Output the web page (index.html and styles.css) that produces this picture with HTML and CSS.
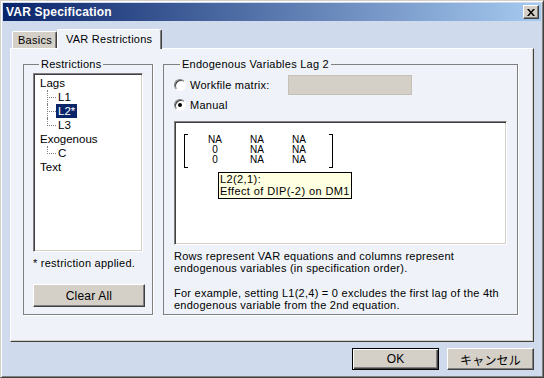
FILE: index.html
```html
<!DOCTYPE html>
<html>
<head>
<meta charset="utf-8">
<link rel="stylesheet" href="styles.css">
</head>
<body>
<div class="window">
  <div class="titlebar">
    <span class="title">VAR Specification</span>
    <span class="close"><svg width="8" height="7" viewBox="0 0 8 7"><path d="M0 0h2l2 2.5L6 0h2L5 3.5 8 7H6L4 4.5 2 7H0l3-3.5z" fill="#000"/></svg></span>
  </div>
  <div class="body">
    <div class="tabs">
      <div class="tab">Basics</div>
      <div class="tab active">VAR Restrictions</div>
    </div>
    <div class="panel">
      <fieldset class="group group-left">
        <legend>Restrictions</legend>
        <div class="tree">
          <div class="row">Lags</div>
          <div class="row child"><span class="lbl">L1</span></div>
          <div class="row child"><span class="lbl sel">L2*</span></div>
          <div class="row child last"><span class="lbl">L3</span></div>
          <div class="row">Exogenous</div>
          <div class="row child last"><span class="lbl">C</span></div>
          <div class="row">Text</div>
        </div>
        <div class="note">* restriction applied.</div>
        <button class="btn clear">Clear All</button>
      </fieldset>
      <fieldset class="group group-right">
        <legend>Endogenous Variables Lag 2</legend>
        <div class="radio-row">
          <span class="radio"></span><span class="rlabel wide">Workfile matrix:</span><span class="field"></span>
        </div>
        <div class="radio-row">
          <span class="radio checked"></span><span class="rlabel">Manual</span>
        </div>
        <div class="matrix-box">
          <div class="matrix">
            <span class="bracket left"></span>
            <div class="grid">
              <span>NA</span><span>NA</span><span>NA</span>
              <span>0</span><span>NA</span><span>NA</span>
              <span>0</span><span>NA</span><span>NA</span>
            </div>
            <span class="bracket right"></span>
          </div>
          <div class="tooltip">
            <div class="tline">L2(2,1):</div>
            <div class="tline">Effect of DIP(-2) on DM1</div>
          </div>
        </div>
        <div class="desc">
          <div class="dline">Rows represent VAR equations and columns represent</div>
          <div class="dline">endogenous variables (in specification order).</div>
        </div>
        <div class="desc second">
          <div class="dline">For example, setting L1(2,4) = 0 excludes the first lag of the 4th</div>
          <div class="dline">endogenous variable from the 2nd equation.</div>
        </div>
      </fieldset>
    </div>
    <div class="footer">
      <button class="btn default">OK</button>
      <button class="btn">キャンセル</button>
    </div>
  </div>
</div>
</body>
</html>
```

FILE: styles.css
```css
* { box-sizing: border-box; }
html, body { margin: 0; padding: 0; }
body {
  width: 544px;
  height: 378px;
  overflow: hidden;
  font-family: "Liberation Sans", "Noto Sans CJK JP", sans-serif;
  font-size: 11px;
  letter-spacing: 0.25px;
  color: #000;
}
.window {
  width: 544px;
  height: 378px;
  background: #cfdbed;
  border: 1px solid;
  border-color: #d4d0c8 #404040 #404040 #d4d0c8;
  box-shadow: inset 1px 1px #fff, inset -1px -1px #808080;
  padding: 2px;
  display: flex;
  flex-direction: column;
}
.titlebar {
  height: 18px;
  background: linear-gradient(to right, #0a246a, #a6caf0);
  display: flex;
  align-items: center;
  justify-content: space-between;
  padding: 0 2px 0 3px;
}
.title {
  color: #fff;
  font-weight: bold;
  font-size: 12px;
  letter-spacing: 0.2px;
}
.close {
  width: 16px;
  height: 14px;
  background: #d4d0c8;
  border: 1px solid;
  border-color: #fff #404040 #404040 #fff;
  box-shadow: inset -1px -1px #808080;
  display: flex;
  align-items: center;
  justify-content: center;
}
.close svg { display: block; margin-left: -1px; }
.body {
  flex: 1;
  padding: 0 7px;
  display: flex;
  flex-direction: column;
}
.tabs {
  margin-top: 8px;
  height: 19px;
  padding-left: 2px;
  display: flex;
  align-items: flex-start;
  position: relative;
  z-index: 1;
}
.tab {
  margin-top: 2px;
  height: 17px;
  width: 45px;
  background: #d4d0c8;
  border: 1px solid;
  border-bottom: none;
  border-color: #fff #404040 #fff #fff;
  box-shadow: inset -1px 0 #808080;
  border-radius: 2px 2px 0 0;
  padding: 2px 0 0 5px;
  line-height: 13px;
}
.tab.active {
  margin-top: 0;
  height: 20px;
  width: 105px;
  background: #eff3f9;
  padding: 3px 0 0 8px;
}
.panel {
  height: 294px;
  background: #eff3f9;
  border: 1px solid;
  border-color: #fff #404040 #404040 #fff;
  box-shadow: inset -1px -1px #d4d0c8;
  padding: 8px 0 26px 12px;
  display: flex;
  align-items: stretch;
}
.group {
  margin: 0;
  border: 1px solid #808080;
  box-shadow: 1px 1px #fff;
  min-width: 0;
}
.group legend {
  margin-left: 6px;
  padding: 0 2px;
  line-height: 14px;
}
.group-left {
  width: 130px;
  padding: 2px 9px 0 9px;
}
.group-right {
  width: 355px;
  margin-left: 10px;
  padding: 2px 9px 0 10px;
}
.tree {
  width: 110px;
  height: 179px;
  background: #fff;
  border: 1px solid;
  border-color: #808080 #fff #fff #808080;
  box-shadow: inset 1px 1px #404040, inset -1px -1px #d4d0c8;
  padding: 2px 0 0 6px;
  font-size: 11.5px;
  letter-spacing: 0;
}
.row {
  height: 14px;
  line-height: 14px;
  position: relative;
}
.row.child { padding-left: 16px; }
.row.child::before {
  content: "";
  position: absolute;
  left: 7px;
  top: 0;
  width: 8px;
  height: 7px;
  border-left: 1px dotted #808080;
  border-bottom: 1px dotted #808080;
}
.row.child:not(.last)::after {
  content: "";
  position: absolute;
  left: 7px;
  top: 7px;
  height: 7px;
  border-left: 1px dotted #808080;
}
.lbl {
  display: inline-block;
  padding: 0 2px;
}
.lbl.sel {
  background: #0a246a;
  color: #fff;
}
.note {
  margin-top: 5px;
  line-height: 13px;
}
.btn {
  font-family: "Liberation Sans", "Noto Sans CJK JP", sans-serif;
  font-size: 12px;
  letter-spacing: 0.2px;
  color: #000;
  background: #d4d0c8;
  border: 1px solid;
  border-color: #fff #404040 #404040 #fff;
  box-shadow: inset -1px -1px #808080;
  padding: 0;
  margin: 0;
}
.clear {
  display: block;
  margin-top: 14px;
  width: 112px;
  height: 23px;
}
.radio-row {
  height: 20px;
  display: flex;
  align-items: center;
}
.radio-row:first-of-type { margin-top: 2px; }
.radio {
  width: 12px;
  height: 12px;
  border-radius: 50%;
  background: #fff;
  border: 1px solid;
  border-color: #808080 #fff #fff #808080;
  box-shadow: inset 1px 1px #404040;
  display: flex;
  align-items: center;
  justify-content: center;
}
.radio.checked::after {
  content: "";
  width: 4px;
  height: 4px;
  border-radius: 50%;
  background: #000;
}
.rlabel { margin-left: 4px; }
.rlabel.wide { width: 98px; }
.field {
  width: 124px;
  height: 20px;
  background: #d4d0c8;
  border: 1px solid #c4c0b8;
}
.matrix-box {
  position: relative;
  margin-top: 6px;
  width: 333px;
  height: 124px;
  background: #fff;
  border: 1px solid;
  border-color: #808080 #fff #fff #808080;
  box-shadow: inset 1px 1px #404040, inset -1px -1px #d4d0c8;
  padding: 12px 0 0 9px;
}
.matrix {
  display: flex;
  align-items: flex-start;
}
.bracket {
  width: 4px;
  height: 34px;
  border: 1px solid #000;
}
.bracket.left { border-right: none; }
.bracket.right { border-left: none; margin-left: 9px; }
.grid {
  margin-left: 6px;
  display: grid;
  grid-template-columns: repeat(3, 42px);
  font-size: 10px;
  letter-spacing: 0;
  line-height: 10px;
  padding-top: 1px;
  text-align: center;
}
.tooltip {
  position: absolute;
  left: 43px;
  top: 50px;
  width: 134px;
  height: 27px;
  background: #ffffe1;
  border: 1px solid #000;
  padding: 0 1px;
  white-space: nowrap;
  letter-spacing: 0.4px;
}
.tline, .dline {
  height: 12px;
  line-height: 12px;
}
.desc {
  margin-top: 5px;
  white-space: nowrap;
}
.desc.second { margin-top: 13px; }
.footer {
  margin-top: 6px;
  display: flex;
  justify-content: flex-end;
  gap: 8px;
}
.footer .btn {
  width: 87px;
  height: 22px;
}
.btn.default {
  border: 1px solid #000;
  box-shadow: inset 1px 1px #fff, inset -1px -1px #404040, inset -2px -2px #808080;
}
```
